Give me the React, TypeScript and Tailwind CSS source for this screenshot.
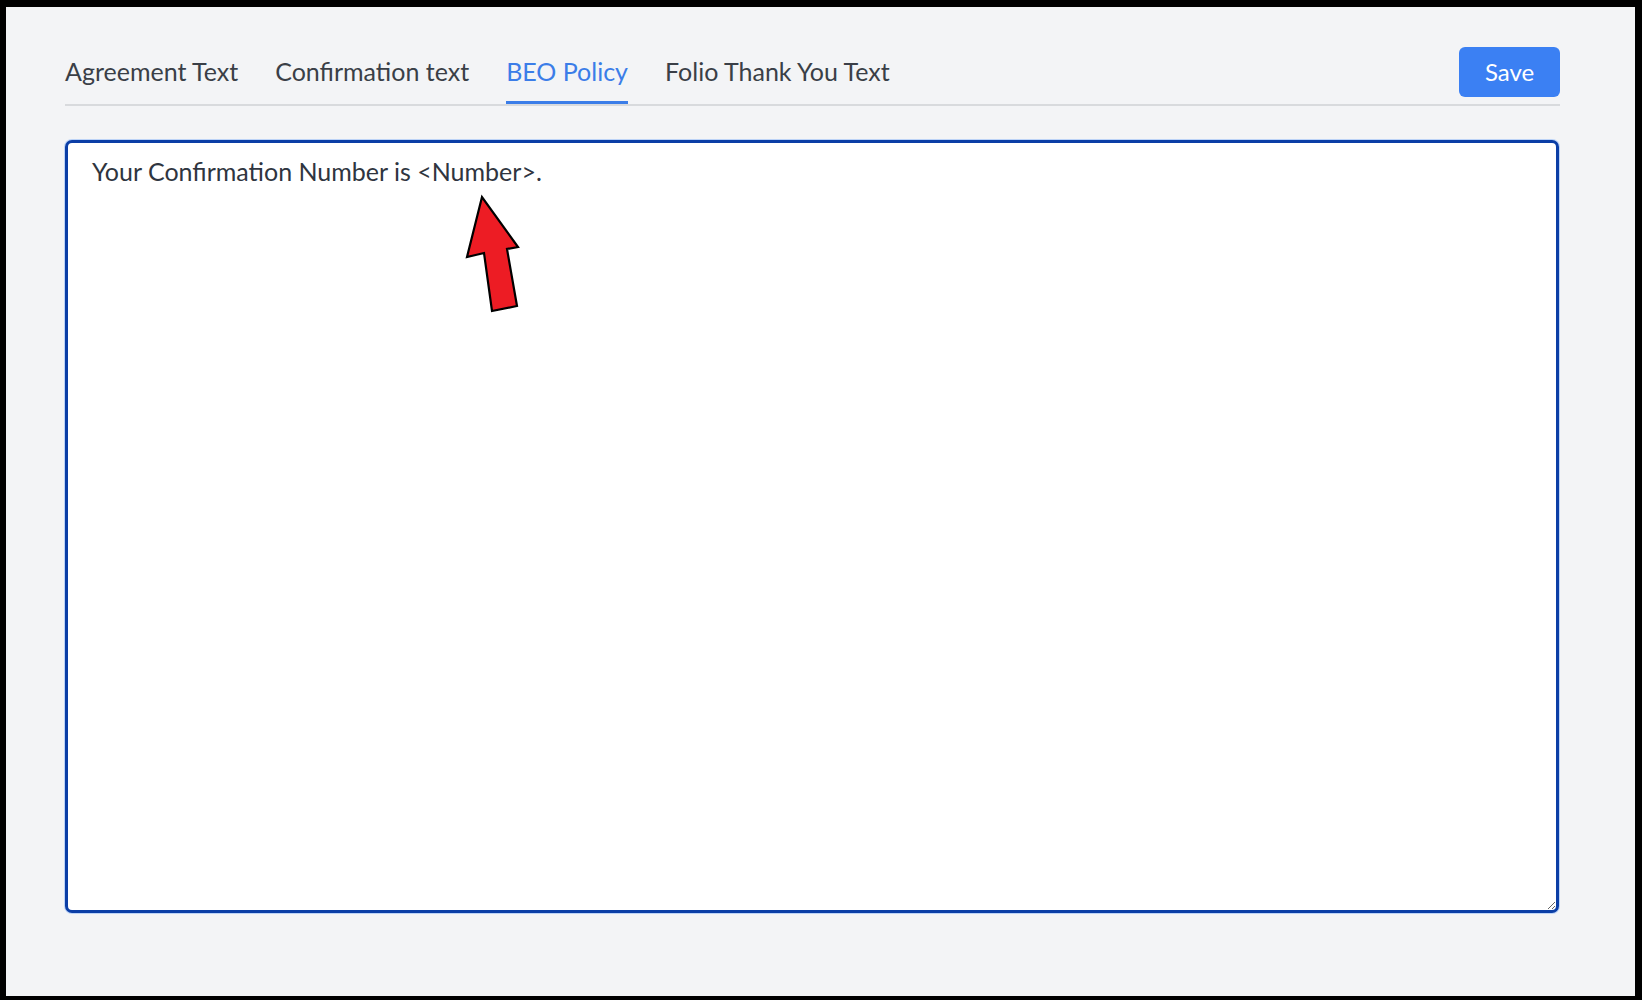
import { useState } from "react";

const TABS = ["Agreement Text", "Confirmation text", "BEO Policy", "Folio Thank You Text"];

function RedArrow() {
  return (
    <svg
      className="pointer-events-none absolute left-[460px] top-[190px]"
      width="65"
      height="130"
      viewBox="0 0 65 130"
    >
      <polygon
        points="22,7 7,67 24,63 32,121 57,116 47,59 58,57"
        fill="#ed1c24"
        stroke="#000"
        strokeWidth="2.2"
        strokeLinejoin="miter"
      />
    </svg>
  );
}

export default function App() {
  const [active, setActive] = useState("BEO Policy");
  const [text, setText] = useState("Your Confirmation Number is <Number>.");

  return (
    <div className="relative h-[1000px] w-full bg-black pt-[7px] pr-[7px] pb-[4px] pl-[6px]">
      <div
        className="h-full bg-[#f3f4f6] pt-[40px] pl-[59px] pr-[75px]"
        style={{ fontFamily: "Lato, 'Noto Sans', sans-serif" }}
      >
        <div className="flex items-end justify-between border-b-2 border-[#d8dadd]">
          <div className="flex gap-[37px]">
            {TABS.map((t) => (
              <button
                key={t}
                type="button"
                onClick={() => setActive(t)}
                className={`border-b-[3px] pb-[14px] text-[25px] leading-[32px] ${
                  t === active
                    ? "border-[#3b7de8] text-[#3b7de8]"
                    : "border-transparent text-[#3a3f47]"
                }`}
              >
                {t}
              </button>
            ))}
          </div>
          <div className="pb-[7px]">
            <button
              type="button"
              className="h-[50px] w-[101px] rounded-[6px] bg-[#3b80f3] text-[24px] text-white"
            >
              Save
            </button>
          </div>
        </div>

        <textarea
          value={text}
          onChange={(e) => setText(e.target.value)}
          className="mt-[34px] block h-[773px] w-[1494px] rounded-[7px] border-[3px] border-[#0b3ea6] bg-white pt-[12px] pl-[24px] text-[25px] leading-[32px] text-[#2f3540] shadow-[0_0_0_1px_#bcd3f7] outline-none"
        />
      </div>
      <RedArrow />
    </div>
  );
}
